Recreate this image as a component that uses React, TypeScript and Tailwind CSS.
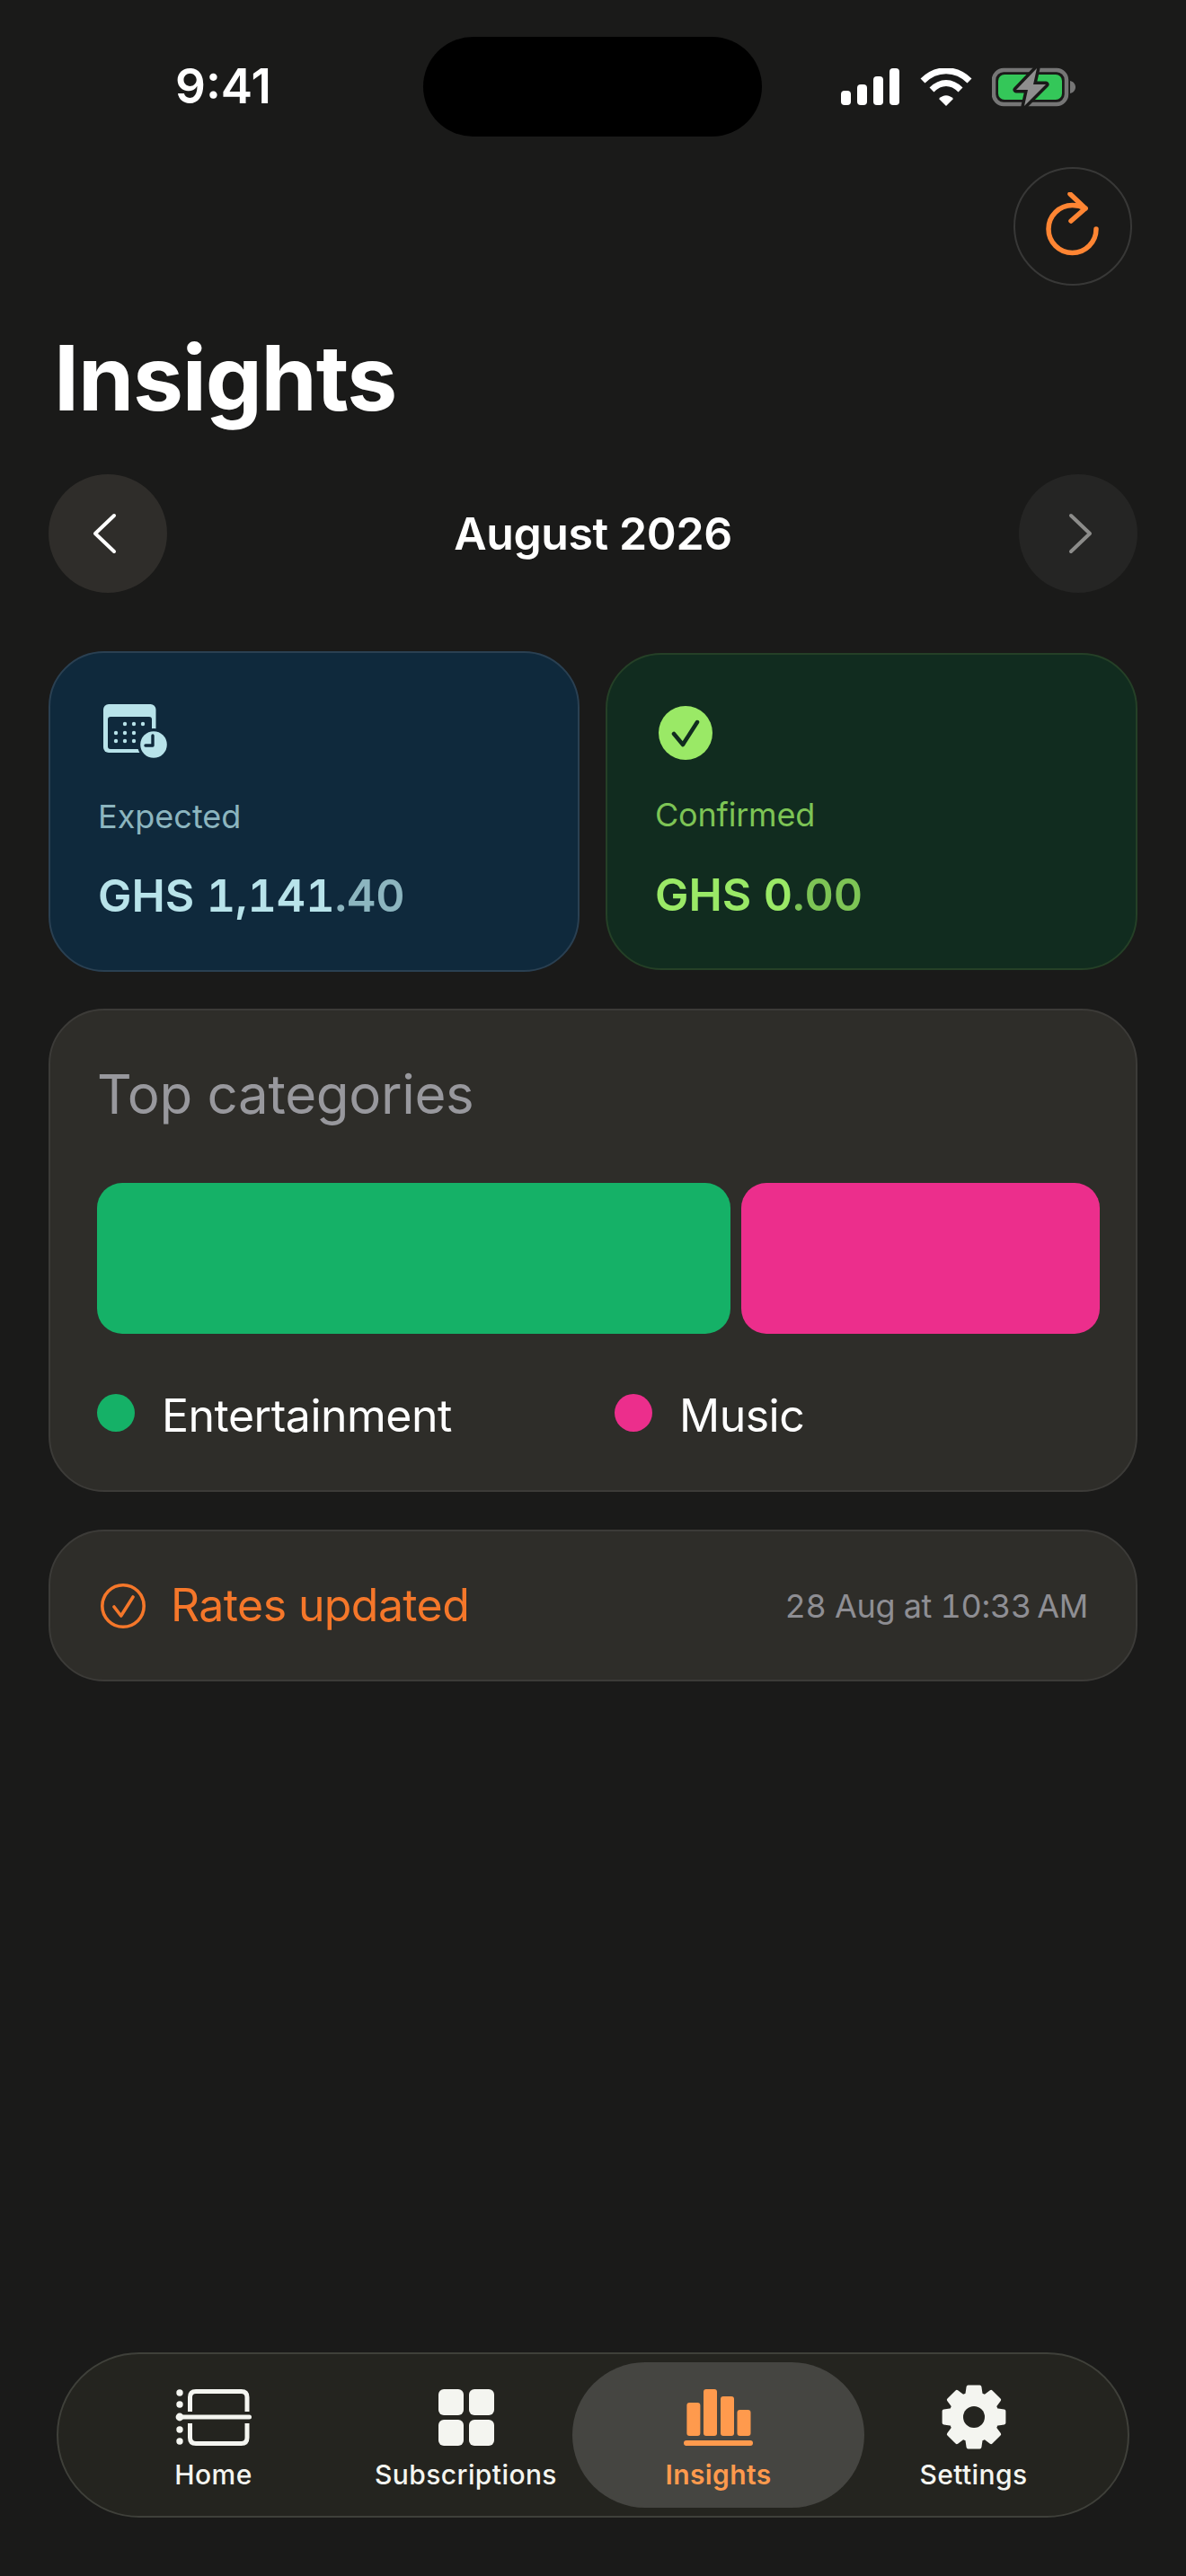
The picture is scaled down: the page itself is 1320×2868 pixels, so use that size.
import React from "react";

const inter = { fontFamily: "Inter, sans-serif" };

// eight toothed cog outline, centred on 36,36
function gearPath() {
  const pts: string[] = [];
  for (let i = 0; i < 8; i++) {
    const a = (i * Math.PI) / 4 - Math.PI / 2;
    const step = [
      [26, -0.3],
      [34, -0.19],
      [34, 0.19],
      [26, 0.3],
    ];
    for (const [r, off] of step) {
      pts.push(`${(36 + r * Math.cos(a + off)).toFixed(2)} ${(36 + r * Math.sin(a + off)).toFixed(2)}`);
    }
  }
  return `M${pts.join(" L")} Z`;
}

function StatusIcons() {
  return (
    <div className="flex items-center gap-[22px]">
      <svg width="66" height="41" viewBox="0 0 66 41" fill="#fff">
        <rect x="0" y="25" width="11" height="16" rx="4" />
        <rect x="18" y="18" width="11" height="23" rx="4" />
        <rect x="36" y="9" width="11" height="32" rx="4" />
        <rect x="54" y="0" width="11" height="41" rx="4" />
      </svg>
      <svg width="58" height="42" viewBox="0 0 58 42" fill="none" stroke="#fff" strokeWidth="7">
        <path d="M3 14 C18 -1 40 -1 55 14" />
        <path d="M13 24 C23 14 35 14 45 24" />
        <path d="M21 34 L29 42 L37 34 C32 29 26 29 21 34 Z" fill="#fff" strokeWidth="0" />
      </svg>
      <svg width="93" height="44" viewBox="0 0 93 44" fill="none">
        <rect x="2" y="3" width="81" height="38" rx="11" stroke="#767676" strokeWidth="4.5" />
        <rect x="7" y="8" width="71" height="28" rx="7" fill="#34c759" />
        <path d="M87 15 C91 16 93 19 93 22 C93 25 91 28 87 29 Z" fill="#767676" />
        <path
          d="M50 1 L27 25 L40 25 L36 43 L60 19 L46 19 Z"
          fill="#8e8e8e"
          stroke="#1a1a19"
          strokeWidth="7"
          strokeLinejoin="round"
          paintOrder="stroke"
        />
      </svg>
    </div>
  );
}

function CalendarClock() {
  return (
    <svg width="72" height="60" viewBox="0 0 72 60">
      <rect x="0" y="0" width="58.5" height="54" rx="6" fill="#b8e3ea" />
      <rect x="5" y="14" width="49" height="36" rx="3" fill="#0f293c" />
      <circle cx="56" cy="45" r="18" fill="#0f293c" />
      <g fill="#b8e3ea">
        <circle cx="24" cy="22" r="2.2" /><circle cx="34" cy="22" r="2.2" /><circle cx="44" cy="22" r="2.2" />
        <circle cx="14" cy="32" r="2.2" /><circle cx="24" cy="32" r="2.2" /><circle cx="34" cy="32" r="2.2" />
        <circle cx="14" cy="41" r="2.2" /><circle cx="24" cy="41" r="2.2" /><circle cx="34" cy="41" r="2.2" />
        <circle cx="56" cy="45" r="14.8" />
      </g>
      <path d="M55 35 V46 H47" fill="none" stroke="#0f293c" strokeWidth="3.4" strokeLinecap="round" strokeLinejoin="round" />
    </svg>
  );
}

function HomeIcon() {
  return (
    <svg width="85" height="63" viewBox="0 0 85 63" fill="none">
      <g fill="#f4f5f0">
        <circle cx="5" cy="4" r="3.7" />
        <circle cx="5" cy="17" r="3.7" />
        <circle cx="5" cy="31" r="4.4" />
        <circle cx="5" cy="45" r="3.7" />
        <circle cx="5" cy="58" r="3.7" />
      </g>
      <path d="M16.5 25 V9 C16.5 4.5 18.5 2.5 23 2.5 H73.5 C78 2.5 80 4.5 80 9 V25" stroke="#f4f5f0" strokeWidth="5" />
      <path d="M16.5 38 V54 C16.5 58.5 18.5 60.5 23 60.5 H73.5 C78 60.5 80 58.5 80 54 V38" stroke="#f4f5f0" strokeWidth="5" />
      <rect x="5" y="28.5" width="80" height="5" rx="2.5" fill="#f4f5f0" />
    </svg>
  );
}

function GridIcon() {
  return (
    <div className="grid w-[62px] grid-cols-2 gap-x-[6px] gap-y-[5px]">
      <div className="h-[29px] rounded-[6px] bg-[#f4f5f0]" />
      <div className="h-[29px] rounded-[6px] bg-[#f4f5f0]" />
      <div className="h-[29px] rounded-[6px] bg-[#f4f5f0]" />
      <div className="h-[29px] rounded-[6px] bg-[#f4f5f0]" />
    </div>
  );
}

function BarsIcon() {
  return (
    <svg width="77" height="63" viewBox="0 0 77 63" fill="#ff9a4d">
      <rect x="3.4" y="15" width="15" height="37" rx="3" />
      <rect x="22" y="0" width="15" height="52" rx="3" />
      <rect x="41" y="8" width="15" height="44" rx="3" />
      <rect x="59.5" y="23" width="15" height="29" rx="3" />
      <rect x="0" y="57" width="77" height="6" rx="3" />
    </svg>
  );
}

function GearIcon() {
  return (
    <svg className="-mb-[4px]" width="72" height="72" viewBox="0 0 72 72">
      <path fill="#f4f5f0" stroke="#f4f5f0" strokeWidth="4" strokeLinejoin="round" d={gearPath()} />
      <circle cx="36" cy="36" r="12" fill="#24241f" />
    </svg>
  );
}

function NavItem({ label, icon, active }: { label: string; icon: React.ReactNode; active?: boolean }) {
  return (
    <div
      className={
        active
          ? "-ml-[22px] -mr-[19px] flex h-[162px] w-[325px] shrink-0 flex-col items-center justify-center rounded-[81px] bg-[#454541] pt-[5px]"
          : "flex w-[281px] shrink-0 flex-col items-center pt-[5px]"
      }
    >
      <div className="flex h-[68px] items-end justify-center">{icon}</div>
      <span
        className={
          active
            ? "mt-[14px] text-[30px] leading-[36px] font-semibold tracking-[0.4px] text-[#ff9a4d]"
            : "mt-[14px] text-[30px] leading-[36px] font-medium tracking-[0.4px] text-[#f4f5f0]"
        }
      >
        {label}
      </span>
    </div>
  );
}

export default function App() {
  return (
    <div className="flex h-[2868px] w-[1320px] flex-col bg-[#1a1a19] text-white" style={inter}>
      {/* status bar */}
      <div className="mt-[41px] flex h-[111px] items-center pl-[195px] pr-[123px]">
        <span className="w-[276px] text-[53px] font-semibold">9:41</span>
        <div className="h-[111px] w-[377px] rounded-[56px] bg-black" />
        <div className="ml-auto">
          <StatusIcons />
        </div>
      </div>

      <div className="mt-[34px] flex justify-end pr-[60px]">
        <button className="flex h-[132px] w-[132px] items-center justify-center rounded-full border-2 border-[#383837]">
          <svg className="-mt-[4px]" width="62" height="72" viewBox="0 0 62 72" fill="none" stroke="#ff8533" strokeWidth="5.5" strokeLinecap="round" strokeLinejoin="round">
            <path d="M57 41 A26.5 26.5 0 1 1 30.5 14.5 C35 14.5 40 15.5 45 18" />
            <path d="M28 2 L45 18 L29 32" />
          </svg>
        </button>
      </div>

      <h1 className="mt-[45px] pl-[60px] text-[100px] leading-[116px] font-bold tracking-[-1.2px]">Insights</h1>

      <div className="mt-[49px] flex items-center justify-between px-[54px]">
        <button className="flex h-[132px] w-[132px] items-center justify-center rounded-full bg-[#2f2d2a] pr-[8px]">
          <svg width="30" height="46" viewBox="0 0 30 46" fill="none" stroke="#fff" strokeWidth="4" strokeLinecap="round" strokeLinejoin="round">
            <path d="M26 3 L5 23 L26 43" />
          </svg>
        </button>
        <span className="text-[50px] font-semibold tracking-[-0.4px]">August 2026</span>
        <button className="flex h-[132px] w-[132px] items-center justify-center rounded-full bg-[#252524] pl-[6px]">
          <svg width="30" height="46" viewBox="0 0 30 46" fill="none" stroke="#8c8c8a" strokeWidth="4" strokeLinecap="round" strokeLinejoin="round">
            <path d="M4 3 L25 23 L4 43" />
          </svg>
        </button>
      </div>

      <div className="mt-[65px] flex items-start gap-[29px] px-[54px]">
        <div className="h-[357px] w-[591px] rounded-[62px] border-2 border-[#2a4052] bg-[#0f293c] pl-[53px] pt-[57px]">
          <div className="pl-[6px]">
            <CalendarClock />
          </div>
          <div className="mt-[43px] text-[36px] leading-[44px] text-[#8cb5bf]">Expected</div>
          <div className="mt-[36px] text-[50px] leading-[60px] font-semibold tabular-nums text-[#b8e3ea]">
            GHS 1,141<span className="text-[#8cb5bf]">.40</span>
          </div>
        </div>
        <div className="mt-[2px] h-[353px] w-[592px] rounded-[62px] border-2 border-[#254027] bg-[#112c1f] pl-[53px] pt-[57px]">
          <svg width="60" height="60" viewBox="0 0 60 60" className="ml-[4px]">
            <circle cx="30" cy="30" r="30" fill="#9ae966" />
            <path d="M17 31 L27 43 L43 18" fill="none" stroke="#112c1f" strokeWidth="4.5" strokeLinecap="round" strokeLinejoin="round" />
          </svg>
          <div className="mt-[39px] text-[36px] leading-[44px] tracking-[-0.2px] text-[#7dc455]">Confirmed</div>
          <div className="mt-[37px] text-[50px] leading-[60px] font-semibold tabular-nums text-[#9ae966]">
            GHS 0<span className="text-[#7dc455]">.00</span>
          </div>
        </div>
      </div>

      {/* categories */}
      <div className="mx-[54px] mt-[41px] h-[538px] rounded-[62px] border-2 border-[#3c3b38] bg-[#2e2d29] pl-[52px] pr-[40px] pt-[56px]">
        <div className="text-[60px] leading-[74px] tracking-[-0.3px] text-[#98989d]">Top categories</div>
        <div className="mt-[62px] flex gap-[12px]">
          <div className="h-[168px] w-[705px] rounded-[28px] bg-[#15b167]" />
          <div className="h-[168px] w-[399px] rounded-[28px] bg-[#ec2e8c]" />
        </div>
        <div className="mt-[61px] flex items-center">
          <div className="flex w-[576px] items-center gap-[30px]">
            <div className="mb-[6px] h-[42px] w-[42px] rounded-full bg-[#15b167]" />
            <span className="text-[50px] leading-[60px] tracking-[-0.5px] text-white">Entertainment</span>
          </div>
          <div className="flex items-center gap-[30px]">
            <div className="mb-[6px] h-[42px] w-[42px] rounded-full bg-[#ec2e8c]" />
            <span className="text-[50px] leading-[60px] tracking-[-0.5px] text-white">Music</span>
          </div>
        </div>
      </div>

      <div className="mx-[54px] mt-[42px] flex h-[169px] items-center justify-between rounded-[62px] border-2 border-[#3c3b38] bg-[#2e2d29] pl-[56px] pr-[53px]">
        <div className="flex items-center gap-[28px]">
          <svg width="50" height="50" viewBox="0 0 50 50" fill="none" stroke="#f5772a" strokeWidth="3.6" strokeLinecap="round" strokeLinejoin="round">
            <circle cx="25" cy="25" r="23.2" />
            <path d="M15 26 L22.7 36 L36 15" />
          </svg>
          <span className="text-[50px] tracking-[-0.6px] text-[#f5772a]">Rates updated</span>
        </div>
        <span className="text-[36px] tabular-nums tracking-[-0.3px] text-[#8e8e93]">28 Aug at 10:33{"\u202f"}AM</span>
      </div>

      {/* tab bar */}
      <div className="mx-[63px] mt-auto mb-[65px] flex h-[184px] items-center rounded-[92px] border-2 border-[#3f403a] bg-[#24241f] pl-[32px]">
        <NavItem label="Home" icon={<HomeIcon />} />
        <NavItem label="Subscriptions" icon={<GridIcon />} />
        <NavItem label="Insights" icon={<BarsIcon />} active />
        <NavItem label="Settings" icon={<GearIcon />} />
      </div>
    </div>
  );
}
